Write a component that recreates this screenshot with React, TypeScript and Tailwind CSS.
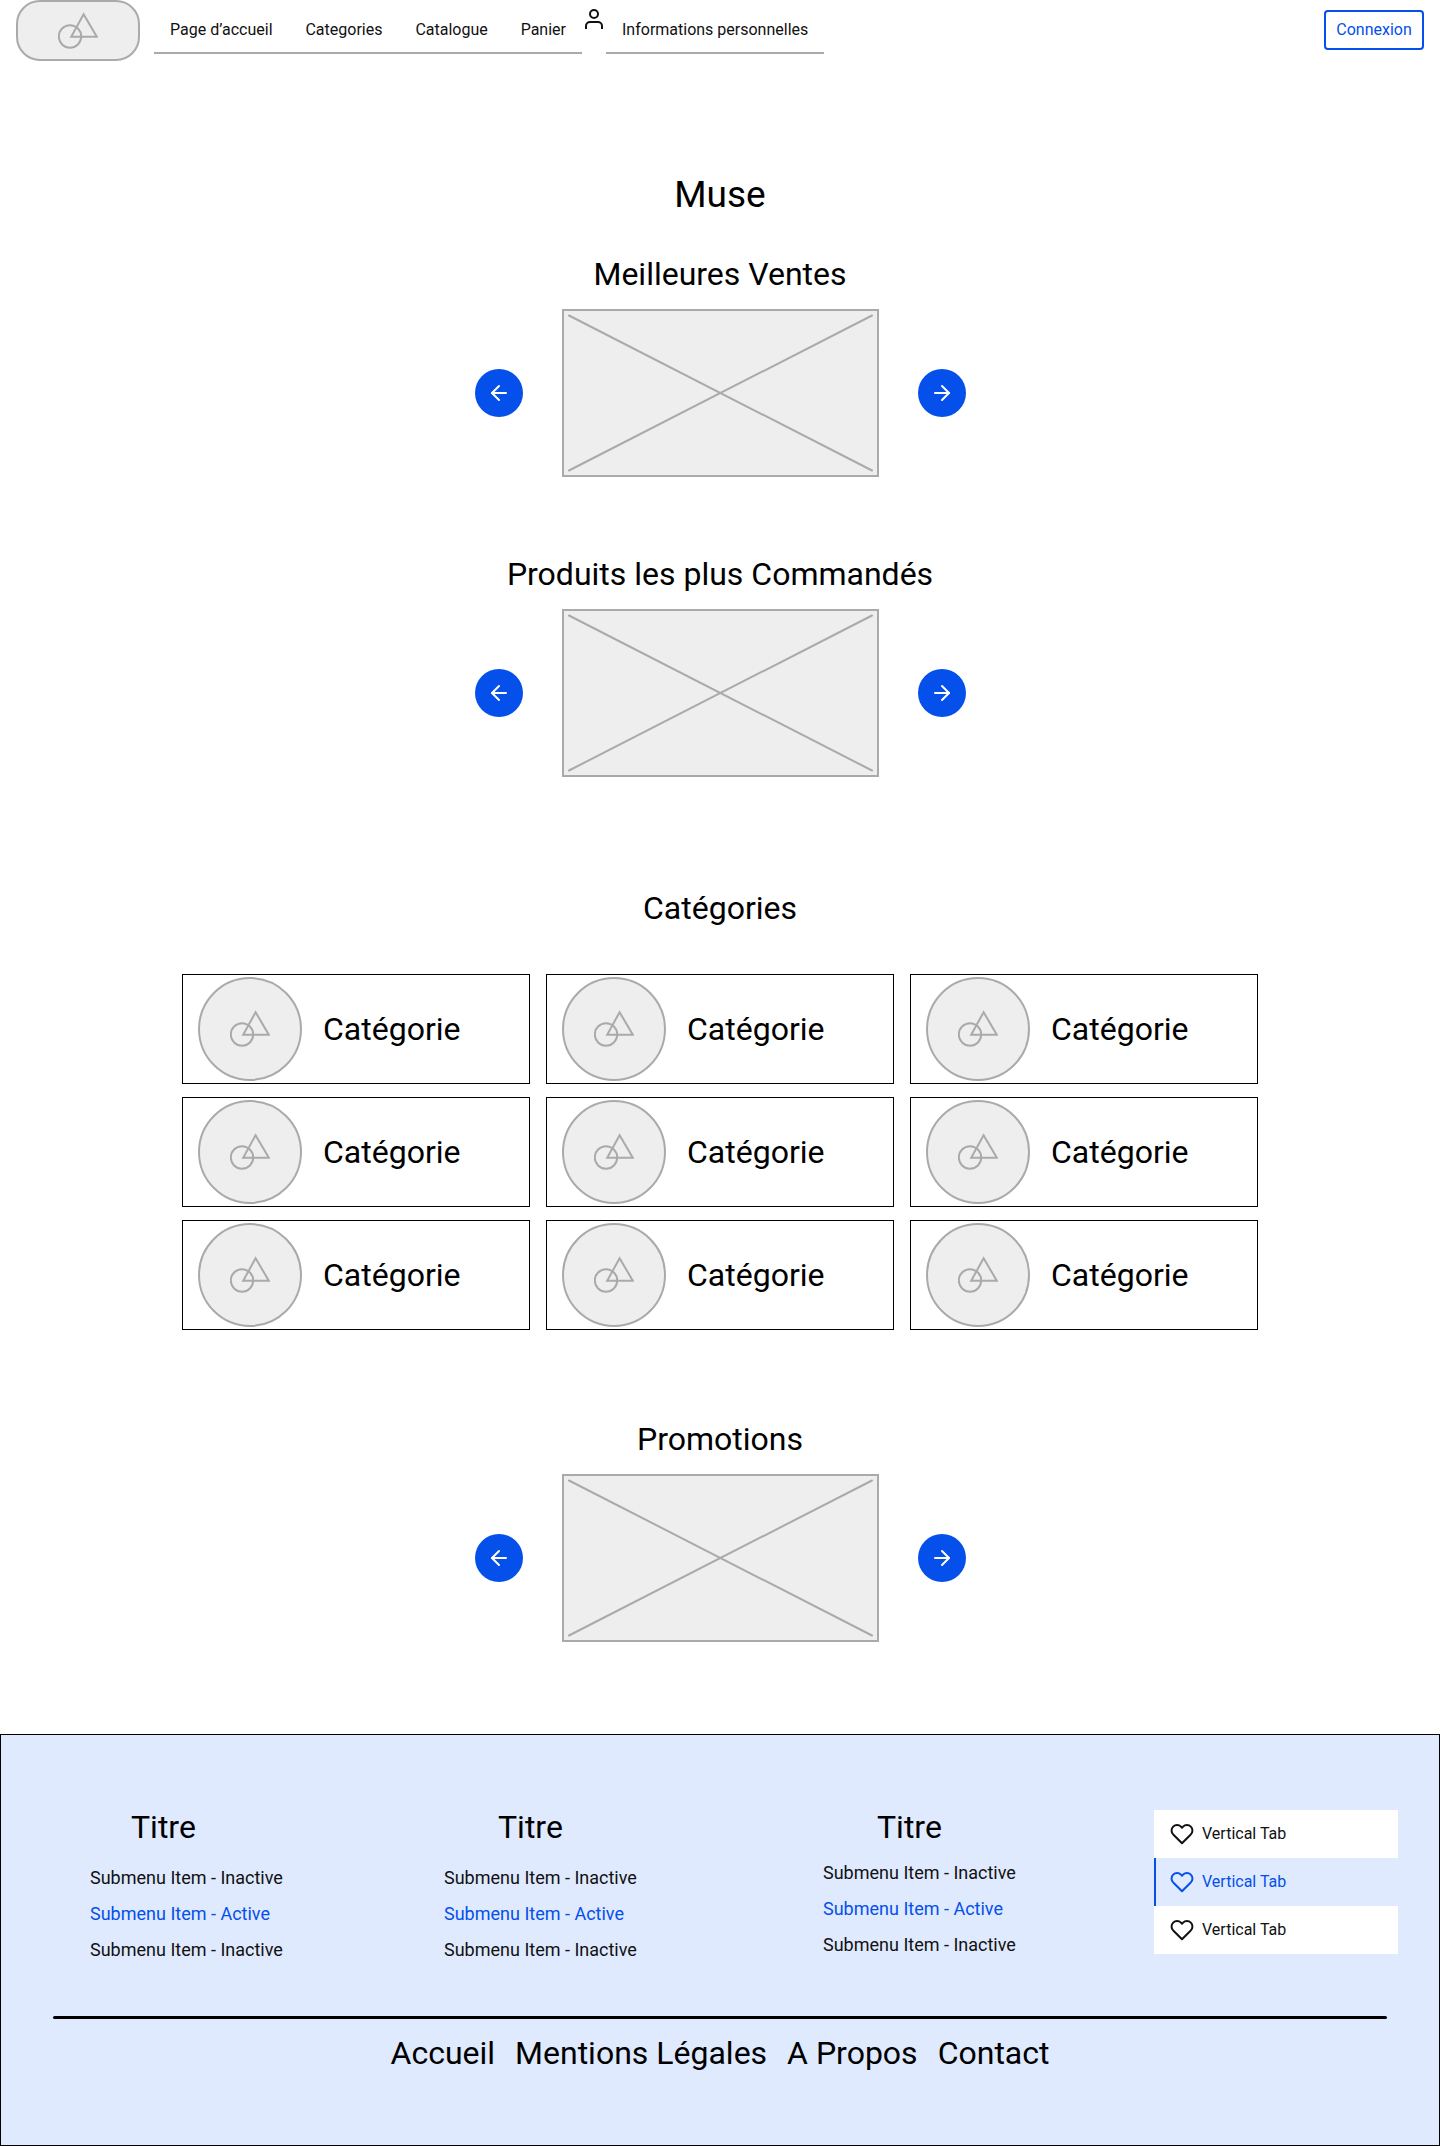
import { ArrowLeft, ArrowRight } from "lucide-react";

const navItems = ["Page d’accueil", "Categories", "Catalogue", "Panier"];

const footerColumns = [
  { id: "a", titleClass: "pl-[41px]", listClass: "mt-[14px]" },
  { id: "b", titleClass: "pl-[54px]", listClass: "mt-[14px]" },
  { id: "c", titleClass: "pl-[54px]", listClass: "mt-[9px]" },
];

const submenu = [
  { label: "Submenu Item - Inactive", active: false },
  { label: "Submenu Item - Active", active: true },
  { label: "Submenu Item - Inactive", active: false },
];

const footerLinks = ["Accueil", "Mentions Légales", "A Propos", "Contact"];

function ShapesIcon() {
  return (
    <svg width="40" height="40" viewBox="0 0 40 40" fill="none" stroke="#aaaaaa" strokeWidth="2" aria-hidden="true">
      <circle cx="12" cy="25.5" r="11.2" />
      <path d="M25.6 3.2 38.8 25.8H13.2L25.6 3.2Z" />
    </svg>
  );
}

function UserIcon() {
  return (
    <svg width="24" height="24" viewBox="0 0 24 24" fill="none" stroke="currentColor" strokeWidth="2" strokeLinejoin="round" aria-hidden="true">
      <path d="M20 22v-3a4 4 0 0 0-4-4H8a4 4 0 0 0-4 4v3" />
      <circle cx="12" cy="7" r="4" />
    </svg>
  );
}

function HeartIcon() {
  return (
    <svg width="24" height="24" viewBox="0 0 24 24" fill="none" stroke="currentColor" strokeWidth="2" strokeLinejoin="round" strokeLinecap="round" aria-hidden="true">
      <path d="M20.84 4.61a5.5 5.5 0 0 0-7.78 0L12 5.67l-1.06-1.06a5.5 5.5 0 0 0-7.78 7.78l1.06 1.06L12 21.23l7.78-7.78 1.06-1.06a5.5 5.5 0 0 0 0-7.78z" />
    </svg>
  );
}

function Carousel({ title }: { title: string }) {
  const button = "flex size-12 shrink-0 items-center justify-center rounded-full bg-[#054feb] text-white";
  return (
    <section className="flex flex-col items-center gap-4">
      <h2 className="text-center text-[32px] leading-[38px]">{title}</h2>
      <div className="flex items-center justify-center gap-[39px]">
        <button type="button" aria-label="Précédent" className={button}>
          <ArrowLeft size={24} />
        </button>
        <div className="h-[168px] w-[317px] border-2 border-[#aaaaaa] bg-[#eeeeee]">
          <svg className="block size-full" viewBox="0 0 313 164" fill="none" stroke="#aaaaaa" strokeWidth="2" strokeLinecap="round" aria-hidden="true">
            <path d="M5 4.500 308 159.500M308 4.500 5 159.500" />
          </svg>
        </div>
        <button type="button" aria-label="Suivant" className={button}>
          <ArrowRight size={24} />
        </button>
      </div>
    </section>
  );
}

function NavGroup({ labels, widthClass }: { labels: string[]; widthClass: string }) {
  return (
    <div className={`flex justify-between border-b-2 border-[#aaaaaa] pt-[18px] pb-[10px] ${widthClass}`}>
      {labels.map((label) => (
        <a key={label} href="#" className="px-4 whitespace-nowrap">
          {label}
        </a>
      ))}
    </div>
  );
}

function Header() {
  return (
    <header className="flex items-start px-4 text-base leading-6 text-[#111111]">
      <a href="#" aria-label="Muse" className="flex h-[61px] w-[124px] items-center justify-center rounded-3xl border-2 border-[#aaaaaa] bg-[#eeeeee]">
        <ShapesIcon />
      </a>
      <nav className="ml-[14px] flex items-start">
        <NavGroup labels={navItems} widthClass="min-w-[428px]" />
        <div className="pt-[7px]">
          <UserIcon />
        </div>
        <NavGroup labels={["Informations personnelles"]} widthClass="min-w-[218px]" />
      </nav>
      <button type="button" className="mt-[10px] ml-auto h-10 w-[100px] rounded border-2 border-[#054feb] text-[#054feb]">
        Connexion
      </button>
    </header>
  );
}

function Footer() {
  return (
    <footer className="border border-black bg-[#dfeaff] pt-[73px] pb-[73px]">
      <div className="grid grid-cols-[354fr_379fr_331fr_244px] pr-[41px] pl-[89px]">
        {footerColumns.map((column) => (
          <div key={column.id}>
            <h3 className={`text-[32px] leading-[38px] ${column.titleClass}`}>Titre</h3>
            <ul className={`text-lg leading-9 ${column.listClass}`}>
              {submenu.map((item, index) => (
                <li key={index}>
                  <a href="#" className={item.active ? "text-[#054feb]" : "text-[#111111]"}>
                    {item.label}
                  </a>
                </li>
              ))}
            </ul>
          </div>
        ))}
        <div role="tablist" aria-orientation="vertical" className="mt-0.5">
          {[false, true, false].map((active, index) => (
            <button
              key={index}
              type="button"
              role="tab"
              aria-selected={active}
              className={`flex h-12 w-full items-center gap-2 border-l-2 pl-[14px] text-base ${
                active ? "border-[#054feb] text-[#054feb]" : "border-white bg-white text-[#111111]"
              }`}
            >
              <HeartIcon />
              Vertical Tab
            </button>
          ))}
        </div>
      </div>
      <hr className="mx-[52px] mt-12 h-[3px] rounded-full border-0 bg-black" />
      <nav className="mt-[15px] flex justify-center gap-5 text-[32px] leading-[38px]">
        {footerLinks.map((label) => (
          <a key={label} href="#">
            {label}
          </a>
        ))}
      </nav>
    </footer>
  );
}

export default function App() {
  return (
    <div className="bg-white font-['Roboto',sans-serif] text-black">
      <Header />
      <main className="pt-28 pb-[92px]">
        <h1 className="mb-[38px] text-center text-[37px] leading-[44px]">Muse</h1>
        <Carousel title="Meilleures Ventes" />
        <div className="mt-[78px]">
          <Carousel title="Produits les plus Commandés" />
        </div>
        <section className="mx-auto mt-28 mb-[90px] max-w-[1076px]">
          <h2 className="text-center text-[32px] leading-[38px]">Catégories</h2>
          <div className="mt-[47px] grid grid-cols-3 gap-x-4 gap-y-[13px]">
            {Array.from({ length: 9 }, (_, index) => (
              <a key={index} href="#" className="flex h-[110px] items-center gap-[21px] border border-black pl-[15px]">
                <span className="flex size-[104px] shrink-0 items-center justify-center rounded-full border-2 border-[#aaaaaa] bg-[#eeeeee]">
                  <ShapesIcon />
                </span>
                <span className="text-[32px] leading-[38px]">Catégorie</span>
              </a>
            ))}
          </div>
        </section>
        <Carousel title="Promotions" />
      </main>
      <Footer />
    </div>
  );
}
